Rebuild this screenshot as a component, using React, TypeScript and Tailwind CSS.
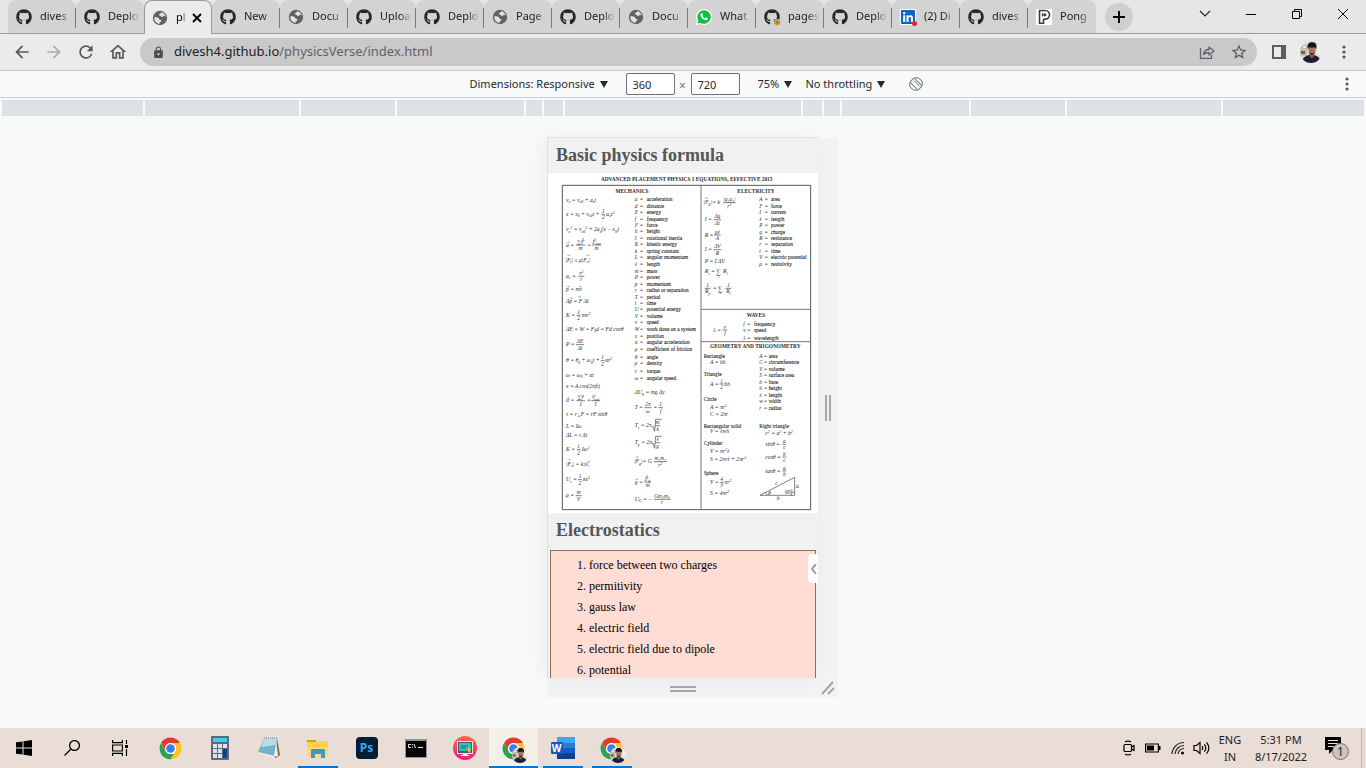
import React from "react";
import { FaGithub, FaLinkedin } from "react-icons/fa";
import { MdArrowBack, MdArrowForward, MdRefresh, MdOutlineHome, MdLock, MdStarBorder } from "react-icons/md";

/* ---------- Browser tabs ---------- */

type TabKind = "github" | "globe" | "whatsapp" | "pages" | "linkedin" | "pong";
type Tab = { kind: TabKind; title: string; active?: boolean };

const tabs: Tab[] = [
  { kind: "github", title: "dives" },
  { kind: "github", title: "Deplo" },
  { kind: "globe", title: "pl", active: true },
  { kind: "github", title: "New" },
  { kind: "globe", title: "Docu" },
  { kind: "github", title: "Uploa" },
  { kind: "github", title: "Deplo" },
  { kind: "globe", title: "Page" },
  { kind: "github", title: "Deplo" },
  { kind: "globe", title: "Docu" },
  { kind: "whatsapp", title: "What" },
  { kind: "pages", title: "pages" },
  { kind: "github", title: "Deplo" },
  { kind: "linkedin", title: "(2) Di" },
  { kind: "github", title: "dives" },
  { kind: "pong", title: "Pong" },
];

function Favicon({ kind }: { kind: TabKind }) {
  switch (kind) {
    case "github":
      return <FaGithub className="size-4 shrink-0 text-[#24292f]" />;
    case "globe":
      return (
        <svg viewBox="0 0 16 16" className="size-4 shrink-0">
          <circle cx="8" cy="8" r="7.200" fill="#5f6368" />
          <path
            d="M9.200 2.300c-.2 1.300-1.500 1.300-2 2-.5.900.2 1.500 1.100 1.500.9.100.7 1.200 1.600 1.300 1 .1.900-1 1.700-1.200.8-.2 1.500.3 2.200 1.100A6 6 0 0 0 9.200 2.300z"
            fill="#e3e3e3"
          />
          <path
            d="M2.300 7.300c1.600-.3 3.300-.2 4.200.6.900.8.4 1.600 1.300 1.900.9.300 1.600.2 1.500 1.100-.1 1-1.400.9-1.700 1.700-.2.500.1.900.1 1.500A6 6 0 0 1 2.300 7.300z"
            fill="#e3e3e3"
          />
        </svg>
      );
    case "whatsapp":
      return (
        <svg viewBox="0 0 16 16" className="size-4 shrink-0">
          <path d="M8 0a8 8 0 1 1-3.600 15.100L0 16l1-4.200A8 8 0 0 1 8 0z" fill="#fff" />
          <path d="M8 1.200a6.800 6.800 0 1 1-3.400 12.700L1.600 14.600l.8-3A6.800 6.800 0 0 1 8 1.200z" fill="#0cc143" />
          <path
            d="M5.300 4.200c.5-.4 1-.3 1.200.2l.5 1.200c.1.400-.2.700-.5 1.100.6 1.200 1.400 1.900 2.600 2.500.5-.6.700-1 1.200-.8l1.300.7c.4.300.2.900-.1 1.400-.7.900-2 .9-3.300.3-1.700-.8-2.900-2-3.600-3.600-.4-1.100-.2-2.300.7-3z"
            fill="#fff"
          />
        </svg>
      );
    case "pages":
      return (
        <span className="relative size-4 shrink-0">
          <FaGithub className="size-4 text-[#24292f]" />
          <span className="absolute -right-px -bottom-px size-[7px] rounded-full border border-[#d3d3d3] bg-[#bf8700]" />
        </span>
      );
    case "linkedin":
      return (
        <span className="relative size-4 shrink-0">
          <FaLinkedin className="size-4 bg-white text-[#0a66c2]" />
          <span className="absolute -right-px -bottom-px size-[5px] rounded-full bg-[#e0242f]" />
        </span>
      );
    default:
      return (
        <svg viewBox="0 0 16 16" className="size-4 shrink-0">
          <rect width="16" height="16" fill="#fff" />
          <path
            d="M3.500 1.500h5.700a4.300 4.300 0 0 1 0 8.700H7.500v4h-4z"
            fill="#fff"
            stroke="#3a3a3a"
            strokeWidth="1.600"
            strokeLinejoin="round"
          />
          <path d="M6.500 4.300v3.200" stroke="#3a3a3a" strokeWidth="1.200" />
          <circle cx="8.800" cy="5.800" r="1.600" fill="#3a3a3a" />
        </svg>
      );
  }
}

function TabStrip() {
  return (
    <div className="flex h-[33px] items-end bg-[#e6e6e6] pl-2">
      <div className="flex h-full" role="tablist">
        {tabs.map((tab, i) => {
          const next = tabs[i + 1];
          const divider = !tab.active && next && !next.active;
          return (
            <div
              key={i}
              className={
                tab.active
                  ? "relative flex h-[34px] w-[68px] items-center rounded-t-lg border border-b-0 border-[#9b9b9b] bg-[#ebebeb] pl-[7px]"
                  : "relative flex h-[33px] w-[68px] items-center rounded-t-lg bg-[#d3d3d3] pl-2"
              }
            >
              <button role="tab" aria-selected={!!tab.active} className="flex items-center gap-2">
                <Favicon kind={tab.kind} />
                <span
                  className={
                    tab.active
                      ? "w-[11px] text-left text-[11px] whitespace-nowrap text-black [mask-image:linear-gradient(to_right,black_50%,transparent)]"
                      : "w-8 text-left text-[11px] whitespace-nowrap text-[#202124] [mask-image:linear-gradient(to_right,black_60%,transparent)]"
                  }
                >
                  {tab.title}
                </span>
              </button>
              {tab.active && (
                <button aria-label="Close tab" className="ml-[5px]">
                  <svg viewBox="0 0 10 10" className="size-[10px]" stroke="#000" strokeWidth="2">
                    <path d="M1 1l8 8M9 1L1 9" />
                  </svg>
                </button>
              )}
              {divider && <span className="absolute top-2 right-0 h-5 w-px bg-[#7b7b7b]" />}
            </div>
          );
        })}
      </div>
      <button
        aria-label="New tab"
        className="mb-[2px] ml-[9px] flex size-7 items-center justify-center rounded-full bg-[#cfcfcf]"
      >
        <svg viewBox="0 0 12 12" className="size-3" stroke="#000" strokeWidth="2">
          <path d="M6 0v12M0 6h12" />
        </svg>
      </button>
      <div className="ml-auto flex h-7 items-start">
        <button aria-label="Search tabs" className="flex h-[18px] w-[46px] items-center justify-center">
          <svg viewBox="0 0 12 8" className="h-2 w-3" fill="none" stroke="#222" strokeWidth="1.100">
            <path d="M1 1l5 5 5-5" />
          </svg>
        </button>
        <button aria-label="Minimize" className="flex h-[18px] w-[46px] items-center justify-center">
          <svg viewBox="0 0 10 10" className="size-[10px]" fill="none" stroke="#000">
            <path d="M0 5.500h10" />
          </svg>
        </button>
        <button aria-label="Restore" className="flex h-[18px] w-[46px] items-center justify-center">
          <svg viewBox="0 0 10 10" className="size-[10px]" fill="none" stroke="#000">
            <path d="M.5 2.500h7v7h-7zM2.500 2.500v-2h7v7h-2" />
          </svg>
        </button>
        <button aria-label="Close" className="flex h-[18px] w-[46px] items-center justify-center">
          <svg viewBox="0 0 10 10" className="size-[10px]" fill="none" stroke="#000">
            <path d="M0 0l10 10M10 0L0 10" />
          </svg>
        </button>
      </div>
    </div>
  );
}

/* ---------- Address bar ---------- */

function Avatar({ className }: { className: string }) {
  return (
    <svg viewBox="0 0 22 22" className={className}>
      <defs>
        <clipPath id="avatar-clip">
          <circle cx="11" cy="11" r="11" />
        </clipPath>
      </defs>
      <g clipPath="url(#avatar-clip)">
        <rect width="22" height="22" fill="#dedbd6" />
        <path d="M0 4h7v11H0z" fill="#b9c2b0" />
        <path d="M1 10h4v3H1z" fill="#9c4f4a" />
        <path d="M3 5h3v2H3z" fill="#eceae6" />
        <path d="M17 3h5v11h-5z" fill="#f0eeeb" />
        <path d="M2 22c0-5 3-7 7-8h5c4 1 6 3 7 8z" fill="#211d33" />
        <path d="M9.500 11h4.500v4L12 17.500 9.500 15z" fill="#8a5f4c" />
        <ellipse cx="12" cy="9" rx="3.500" ry="5" fill="#a87660" />
        <path d="M8 8.500C6.500 4 8.500 1.300 12.300 1.300S17.300 4.500 16 8.500L15 6.300c-1.800.4-4 .4-6 0z" fill="#15120f" />
        <path d="M9.500 11.500q2.500 1 5 0L13.800 14h-3.600z" fill="#4a3028" />
      </g>
    </svg>
  );
}

function Dots() {
  return (
    <svg viewBox="0 0 4 14" className="h-[14px] w-1" fill="#55585c">
      <circle cx="2" cy="2" r="1.600" />
      <circle cx="2" cy="7" r="1.600" />
      <circle cx="2" cy="12" r="1.600" />
    </svg>
  );
}

function AddressBar() {
  return (
    <div className="flex h-[38px] items-center border-y border-t-[#9b9b9b] border-b-[#c4c6c8] bg-[#ebebeb] px-3 text-[#55585c]">
      <button aria-label="Back" className="flex w-5 justify-center">
        <MdArrowBack className="size-5" />
      </button>
      <button aria-label="Forward" className="ml-3 flex w-5 justify-center text-[#a9abad]">
        <MdArrowForward className="size-5" />
      </button>
      <button aria-label="Reload" className="ml-3 flex w-5 justify-center">
        <MdRefresh className="size-5" />
      </button>
      <button aria-label="Home" className="ml-3 flex w-5 justify-center">
        <MdOutlineHome className="size-5" />
      </button>
      <div className="ml-3 flex h-7 flex-1 items-center rounded-full bg-[#c9c9c9] pr-[9px] pl-3">
        <MdLock className="size-[13px] text-[#4a4d51]" />
        <a
          href="https://divesh4.github.io/physicsVerse/index.html"
          className="ml-[9px] flex-1 text-[13px] text-[#202124]"
        >
          divesh4.github.io<span className="text-[#5f6368]">/physicsVerse/index.html</span>
        </a>
        <button aria-label="Share">
          <svg viewBox="0 0 16 16" className="size-4" fill="none" stroke="#5f6368" strokeWidth="1.300">
            <path d="M1.500 4v10.300h11V11" />
            <path d="M4.500 10.500c.3-3.500 2.500-5 5.500-5V3l5 4-5 4V8.500c-2.500 0-4.200.4-5.500 2z" strokeLinejoin="round" />
          </svg>
        </button>
        <button aria-label="Bookmark" className="ml-[15px]">
          <MdStarBorder className="size-[18px]" />
        </button>
      </div>
      <button aria-label="Side panel" className="ml-[15px]">
        <svg viewBox="0 0 14 14" className="size-[14px]">
          <path d="M0 0h14v14H0zM2 2v10h7V2z" fill="#5b5e63" fillRule="evenodd" />
        </svg>
      </button>
      <button aria-label="Profile" className="ml-[14px]">
        <Avatar className="size-[22px]" />
      </button>
      <button aria-label="Menu" className="mr-2 ml-5">
        <Dots />
      </button>
    </div>
  );
}

/* ---------- Device toolbar ---------- */

function Picker({ label, value }: { label: string; value: string }) {
  return (
    <span className="flex items-center gap-1">
      <select
        aria-label={label}
        className="appearance-none bg-transparent text-[11px] text-[#27292c]"
        defaultValue={value}
      >
        <option>{value}</option>
      </select>
      <svg viewBox="0 0 8 7" className="pointer-events-none h-[7px] w-2" fill="#27292c">
        <path d="M0 0h8L4 7z" />
      </svg>
    </span>
  );
}

const field = "h-[22px] w-[49px] rounded-[2px] border border-[#6f7175] bg-white px-[6px] text-[11px] text-[#27292c]";

function DeviceToolbar() {
  return (
    <div className="relative flex h-[27px] items-center justify-center border-b border-[#cacdd1] bg-[#f8faf9] pl-[26px]">
      <Picker label="Device" value="Dimensions: Responsive" />
      <input aria-label="Width" defaultValue="360" className={field + " ml-[18px]"} />
      <span className="w-4 pt-1 text-center text-xs text-[#a1665c]">×</span>
      <input aria-label="Height" defaultValue="720" className={field + " mr-[18px]"} />
      <Picker label="Zoom" value="75%" />
      <span className="w-[14px]" />
      <Picker label="Throttling" value="No throttling" />
      <button aria-label="Rotate" className="ml-6">
        <svg viewBox="0 0 14 14" className="size-[14px]" fill="none" stroke="#6e7277">
          <rect x="4" y="1.200" width="6" height="11.600" rx="1" transform="rotate(-45 7 7)" />
          <path d="M6 .7a6.400 6.400 0 0 1 7.400 7.300M8 13.300A6.400 6.400 0 0 1 .6 6" />
          <path d="M5 3.600l5.400 5.400" />
        </svg>
      </button>
      <button aria-label="More options" className="absolute right-[17px]">
        <Dots />
      </button>
    </div>
  );
}

function Ruler() {
  const outer = (
    <>
      <span className="flex-[141]" />
      <span className="flex-[154]" />
      <span className="flex-[94]" />
      <span className="flex-[127]" />
      <span className="flex-[16]" />
      <span className="flex-[19]" />
    </>
  );
  return (
    <div className="flex h-[18px] gap-[2px] px-[2px] pt-[2px]">
      <div className="flex flex-[561] gap-[2px] *:bg-[#dee1e6]">{outer}</div>
      <div className="flex-[237] bg-[#dee1e6]" />
      <div className="flex flex-[561] flex-row-reverse gap-[2px] *:bg-[#dee1e6]">{outer}</div>
    </div>
  );
}

/* ---------- Formula sheet ---------- */

/* Reads "v_{x}^{2}" style markup into sub- and superscript runs. */
function runs(src: string) {
  const parts = src.match(/[_^]\{[^}]*\}|[^_^]+/g) ?? [];
  let shift = 0;
  return parts.map((p, i) => {
    const sub = p[0] === "_";
    const sup = p[0] === "^";
    const level = sub ? 4 : sup ? -6 : 0;
    const dy = level - shift;
    shift = level;
    return (
      <tspan key={i} dy={dy} fontSize={level ? 12 : undefined}>
        {sub || sup ? p.slice(2, -1) : p}
      </tspan>
    );
  });
}

type Item = [number, number, string];
type Fraction = [number, number, string, string, number];

const formulas: Item[] = [
  [54, 82, "v_{x} = v_{x0} + a_{x}t"],
  [54, 124, "x = x_{0} + v_{x0}t +"], [175, 124, "a_{x}t^{2}"],
  [54, 170, "v_{x}^{2} = v_{x0}^{2} + 2a_{x}(x − x_{0})"],
  [54, 216, "a ="], [118, 216, "="],
  [52, 261, "|F_{f}| ≤ μ|F_{n}|"],
  [54, 310, "a_{c} ="],
  [54, 349, "p = mv"],
  [54, 384, "Δp = F Δt"],
  [54, 427, "K ="], [101, 427, "mv^{2}"],
  [54, 468, "ΔE = W = F_{∥}d = Fd cosθ"],
  [54, 515, "P ="],
  [54, 563, "θ = θ_{0} + ω_{0}t +"], [172, 563, "αt^{2}"],
  [54, 606, "ω = ω_{0} + αt"],
  [54, 641, "x = A cos(2πft)"],
  [54, 683, "α ="], [117, 683, "="],
  [54, 724, "τ = r_{⊥}F = rF sinθ"],
  [54, 759, "L = Iω"],
  [54, 788, "ΔL = τ Δt"],
  [54, 830, "K ="], [101, 830, "Iω^{2}"],
  [54, 874, "|F_{s}| = k|x|"],
  [54, 920, "U_{s} ="], [105, 920, "kx^{2}"],
  [54, 968, "ρ ="],
  [260, 657, "ΔU_{g} = mg Δy"],
  [260, 704, "T ="], [316, 704, "="],
  [260, 758, "T_{s} = 2π"],
  [260, 809, "T_{p} = 2π"],
  [258, 866, "|F_{g}|= G"],
  [260, 927, "g ="],
  [260, 979, "U_{G} = −"],
  [466, 89, "|F_{E}|= k"],
  [470, 140, "I ="],
  [470, 186, "R ="],
  [470, 230, "I ="],
  [470, 265, "P = I ΔV"],
  [470, 296, "R_{s} ="], [525, 296, "R_{i}"],
  [494, 346, "="],
  [496, 471, "λ ="],
  [486, 569, "A = bh"],
  [486, 633, "A ="], [529, 633, "bh"],
  [486, 703, "A = πr^{2}"],
  [486, 723, "C = 2πr"],
  [486, 776, "V = ℓwh"],
  [486, 835, "V = πr^{2}ℓ"],
  [486, 860, "S = 2πrℓ + 2πr^{2}"],
  [486, 928, "V ="], [529, 928, "πr^{3}"],
  [486, 962, "S = 4πr^{2}"],
  [652, 781, "c^{2} = a^{2} + b^{2}"],
  [652, 814, "sinθ ="],
  [652, 852, "cosθ ="],
  [652, 894, "tanθ ="],
  [682, 932, "c"], [744, 940, "a"], [686, 977, "b"], [660, 960, "θ"], [710, 958, "90°"],
];

const fractions: Fraction[] = [
  [166, 124, "1", "2", 12],
  [98, 216, "∑F", "m", 28], [146, 216, "F_{net}", "m", 28],
  [100, 310, "v^{2}", "r", 18],
  [92, 427, "1", "2", 12],
  [96, 515, "ΔE", "Δt", 24],
  [164, 563, "1", "2", 12],
  [98, 683, "∑τ", "I", 26], [143, 683, "τ_{net}", "I", 26],
  [92, 830, "1", "2", 12],
  [96, 920, "1", "2", 12],
  [92, 968, "m", "V", 18],
  [300, 704, "2π", "ω", 22], [338, 704, "1", "f", 14],
  [329, 758, "m", "k", 16],
  [329, 809, "ℓ", "g", 16],
  [337, 866, "m_{1}m_{2}", "r^{2}", 38],
  [299, 927, "F_{g}", "m", 20],
  [342, 979, "Gm_{1}m_{2}", "r", 50],
  [544, 89, "|q_{1}q_{2}|", "r^{2}", 38],
  [508, 140, "Δq", "Δt", 22],
  [508, 186, "ρℓ", "A", 20],
  [508, 230, "ΔV", "R", 24],
  [479, 346, "1", "R_{p}", 18],
  [541, 346, "1", "R_{i}", 18],
  [531, 471, "v", "f", 14],
  [521, 633, "1", "2", 12],
  [521, 928, "4", "3", 12],
  [709, 814, "a", "c", 12],
  [709, 852, "b", "c", 12],
  [709, 894, "a", "b", 12],
];

/* Vector marks above symbols, as left end and height. */
const arrows: [number, number][] = [
  [55, 208], [99, 198], [135, 198], [57, 247], [115, 247], [55, 341], [91, 341], [65, 376], [89, 371],
  [55, 675], [99, 668], [133, 668], [58, 860], [116, 866], [262, 852], [291, 909], [261, 919], [470, 75],
];

const mechanics: [number, string, string][] = [
  [80, "a", "acceleration"], [99, "d", "distance"], [118, "E", "energy"], [138, "f", "frequency"],
  [157, "F", "force"], [176, "h", "height"], [196, "I", "rotational inertia"], [215, "K", "kinetic energy"],
  [235, "k", "spring constant"], [254, "L", "angular momentum"], [274, "ℓ", "length"], [294, "m", "mass"],
  [313, "P", "power"], [333, "p", "momentum"], [352, "r", "radius or separation"], [372, "T", "period"],
  [391, "t", "time"], [410, "U", "potential energy"], [429, "V", "volume"], [448, "v", "speed"],
  [469, "W", "work done on a system"], [489, "x", "position"], [508, "α", "angular acceleration"],
  [529, "μ", "coefficient of friction"], [552, "θ", "angle"], [572, "ρ", "density"], [595, "τ", "torque"],
  [615, "ω", "angular speed"],
];

const electricity: [number, string, string][] = [
  [80, "A", "area"], [99, "F", "force"], [118, "I", "current"], [138, "ℓ", "length"], [157, "P", "power"],
  [177, "q", "charge"], [196, "R", "resistance"], [215, "r", "separation"], [235, "t", "time"],
  [254, "V", "electric potential"], [274, "ρ", "resistivity"],
];

const waves: [number, string, string][] = [
  [455, "f", "frequency"], [472, "v", "speed"], [496, "λ", "wavelength"],
];

const geometry: [number, string, string][] = [
  [550, "A", "area"], [569, "C", "circumference"], [588, "V", "volume"], [608, "S", "surface area"],
  [628, "b", "base"], [647, "h", "height"], [666, "ℓ", "length"], [686, "w", "width"], [706, "r", "radius"],
];

const shapes: Item[] = [
  [467, 550, "Rectangle"], [467, 604, "Triangle"], [467, 678, "Circle"], [467, 759, "Rectangular solid"],
  [467, 811, "Cylinder"], [467, 900, "Sphere"], [634, 759, "Right triangle"],
];

const headings: Item[] = [
  [416, 18, "ADVANCED PLACEMENT PHYSICS 1 EQUATIONS, EFFECTIVE 2015"],
  [252, 54, "MECHANICS"],
  [624, 54, "ELECTRICITY"],
  [624, 426, "WAVES"],
  [622, 521, "GEOMETRY AND TRIGONOMETRY"],
];

function Glossary({ rows, x, eq, word }: { rows: [number, string, string][]; x: number; eq: number; word: number }) {
  return (
    <g>
      {rows.map(([y, symbol, meaning]) => (
        <g key={symbol}>
          <text x={x} y={y + 5} fontStyle="italic">{symbol}</text>
          <text x={eq} y={y + 5}>=</text>
          <text x={word} y={y + 5} stroke="#222" strokeWidth="0.300">{meaning}</text>
        </g>
      ))}
    </g>
  );
}

function FormulaSheet() {
  return (
    <svg
      viewBox="0 0 810 1020"
      role="img"
      aria-label="Physics equations"
      className="block w-full bg-white"
      fontFamily="'Liberation Serif', 'DejaVu Serif', serif"
      fontSize="16"
      fill="#2c2c2c"
    >
      <g fill="none" stroke="#555" strokeWidth="3">
        <path d="M43 37H788V1010H43z" />
        <path d="M459 37V1010M459 409H788M459 506H788" stroke="#777" />
      </g>
      <g textAnchor="middle" fontWeight="bold">
        {headings.map(([x, y, t]) => (
          <text key={t} x={x} y={y + 5}>{t}</text>
        ))}
      </g>
      <Glossary rows={mechanics} x={260} eq={276} word={296} />
      <Glossary rows={electricity} x={634} eq={650} word={669} />
      <Glossary rows={waves} x={586} eq={598} word={618} />
      <Glossary rows={geometry} x={634} eq={648} word={662} />
      <g stroke="#222" strokeWidth="0.300">
        {shapes.map(([x, y, t]) => (
          <text key={t} x={x} y={y + 5}>{t}</text>
        ))}
      </g>
      <g fontStyle="italic" fontSize="17">
        {formulas.map(([x, y, t], i) => (
          <text key={i} x={x} y={y + 5}>{runs(t)}</text>
        ))}
      </g>
      <g fontStyle="italic" textAnchor="middle">
        {fractions.map(([x, y, n, d, w], i) => (
          <g key={i}>
            <text x={x} y={y - 4}>{runs(n)}</text>
            <path d={`M${x - w / 2} ${y}h${w}`} stroke="#444" strokeWidth="2" />
            <text x={x} y={y + 15}>{runs(d)}</text>
          </g>
        ))}
      </g>
      <g fill="none" stroke="#555" strokeWidth="1">
        {arrows.map(([x, y]) => (
          <path key={`${x}-${y}`} d={`M${x} ${y}h9l-3-2m3 2l-3 2`} />
        ))}
      </g>
      <text x="505" y="303" fontSize="20">∑</text>
      <text x="511" y="314" fontSize="10" fontStyle="italic">i</text>
      <text x="510" y="353" fontSize="20">∑</text>
      <text x="516" y="364" fontSize="10" fontStyle="italic">i</text>
      <g fill="none" stroke="#444" strokeWidth="2">
        <path d="M312 762l3-2 5 15 3-36h18M312 813l3-2 5 15 3-36h18" />
        <path d="M636 967L740 913V967zM730 967v-9h10M656 967q0-6-5-9" />
      </g>
    </svg>
  );
}

/* ---------- Emulated device ---------- */

const topics = [
  "force between two charges",
  "permitivity",
  "gauss law",
  "electric field",
  "electric field due to dipole",
  "potential",
];

function SectionTitle({ children }: { children: React.ReactNode }) {
  return <h2 className="h-[35px] pl-2 text-lg leading-[34px] font-bold text-[#555]">{children}</h2>;
}

function Device() {
  return (
    <div className="flex justify-center pt-[21px]">
      <div className="w-[19px]" />
      <div className="w-[271px]">
        <div className="relative h-[541px] overflow-hidden border-t border-l border-[#e2e0e0] bg-[#f1f1f1] font-['Liberation_Serif',serif] shadow-[-4px_0_20px_rgba(0,0,0,0.05)]">
          <SectionTitle>Basic physics formula</SectionTitle>
          <FormulaSheet />
          <SectionTitle>Electrostatics</SectionTitle>
          <ol className="mx-[2px] mt-[2px] list-inside list-decimal border border-[#8d6f58] bg-[#ffddd4] pt-1 pb-4 pl-[26px] text-xs leading-[21px] text-black">
            {topics.map((t) => (
              <li key={t}>{t}</li>
            ))}
          </ol>
          <button
            aria-label="Open panel"
            className="absolute right-0 bottom-[95px] flex h-[29px] w-[10px] items-center rounded-l-[4px] bg-white pl-[3px]"
          >
            <svg viewBox="0 0 6 10" className="h-[10px] w-[6px]" fill="none" stroke="#999" strokeWidth="2">
              <path d="M5 0L1 5l4 5" />
            </svg>
          </button>
        </div>
        <div className="ml-px flex h-5 items-center justify-center bg-[#f1f3f4] pt-px">
          <svg viewBox="0 0 26 6" className="h-[6px] w-[26px]" fill="#a9a9a9">
            <path d="M0 0h26v2H0zM0 4h26v2H0z" />
          </svg>
        </div>
      </div>
      <div className="mt-px flex w-5 flex-col bg-[#f1f3f4]">
        <div className="flex h-[540px] items-center justify-center">
          <svg viewBox="0 0 6 26" className="h-[26px] w-[6px]" fill="#a9a9a9">
            <path d="M0 0h2v26H0zM4 0h2v26H4z" />
          </svg>
        </div>
        <div className="flex h-5 items-center justify-center">
          <svg viewBox="0 0 14 14" className="size-[14px]" stroke="#a3a3a3" strokeWidth="2">
            <path d="M1 13L12 1M7 13l6-6" />
          </svg>
        </div>
      </div>
    </div>
  );
}

/* ---------- Windows taskbar ---------- */

function ChromeLogo({ className }: { className: string }) {
  return (
    <svg viewBox="0 0 48 48" className={className}>
      <circle cx="24" cy="24" r="23" fill="#fff" />
      <path d="M24 1a23 23 0 0 1 19.900 11.500H24A11.500 11.500 0 0 0 14 18.300L4.100 12.500A23 23 0 0 1 24 1z" fill="#e33b2e" />
      <path d="M4.100 12.500L14 29.800l1-12z" fill="#e33b2e" />
      <path d="M43.900 12.500A23 23 0 0 1 24 47l10-17.200a11.500 11.500 0 0 0 0-11.600l-10-5.700z" fill="#fcc31e" />
      <path d="M24 47A23 23 0 0 1 4.100 12.500L14 29.800A11.500 11.500 0 0 0 24 35.500l6.600-.1z" fill="#2da14c" />
      <circle cx="24" cy="24" r="11.500" fill="#fff" />
      <circle cx="24" cy="24" r="9" fill="#3b7ded" />
    </svg>
  );
}

function ChromeProfile() {
  return (
    <span className="relative flex">
      <ChromeLogo className="size-[23px]" />
      <Avatar className="absolute -right-[3px] -bottom-[3px] size-4" />
    </span>
  );
}

function CalculatorIcon() {
  return (
    <svg viewBox="0 0 18 24" className="h-6 w-[18px]">
      <rect width="18" height="24" rx="1" fill="#5c6b7a" />
      <rect x="2" y="2" width="14" height="4" fill="#40cdf5" />
      <path d="M2 8h4v4H2zM7 8h4v4H7zM12 8h4v4h-4zM2 13h4v4H2zM7 13h4v4H7zM2 18h4v4H2zM7 18h4v4H7z" fill="#dce3ea" />
      <rect x="12" y="13" width="4" height="9" fill="#143f86" />
    </svg>
  );
}

function NotepadIcon() {
  return (
    <svg viewBox="0 0 24 22" className="h-[22px] w-6">
      <path d="M20 1l3 17-4 3-3-2z" fill="#7a6a4e" />
      <path d="M19 2l2 17-5 1z" fill="#f7f4ea" />
      <path d="M7 1h13l-3 18L1 15z" fill="#6fb4c8" />
      <path d="M7 1h13l-1 7L4 10z" fill="#b4dde6" />
      <path d="M1 15l16 4-1 2L1 16z" fill="#e8ecec" />
      <path d="M7 1h13" stroke="#6b7c80" strokeDasharray="1 1" />
    </svg>
  );
}

function ExplorerIcon() {
  return (
    <svg viewBox="0 0 22 19" className="h-[19px] w-[22px]">
      <path d="M0 1h9l1 3H0z" fill="#d99e14" />
      <path d="M0 3h10l2-1h9v16H0z" fill="#fccf54" />
      <path d="M0 8h21v10H0z" fill="#ffd96f" />
      <path d="M4 11q0-1 1-1h12q1 0 1 1v8h-4v-4H8v4H4z" fill="#3d94d6" />
    </svg>
  );
}

function PhotoshopIcon() {
  return (
    <span className="flex size-[22px] items-center justify-center rounded-[4px] bg-[#001e36] text-xs font-bold text-[#35a8ff]">
      Ps
    </span>
  );
}

function TerminalIcon() {
  return (
    <svg viewBox="0 0 22 19" className="h-[19px] w-[22px]">
      <rect width="22" height="19" fill="#8f9499" />
      <rect x="1" y="2" width="20" height="16" fill="#050505" />
      <path d="M6 5.500H3.500v3H6M7.500 5v1M7.500 7.500v1M9 5l1.500 4M13 8.500h5" stroke="#e6e6e6" fill="none" />
    </svg>
  );
}

function MonitorIcon() {
  return (
    <svg viewBox="0 0 24 24" className="size-6">
      <defs>
        <linearGradient id="monitor-fill" x1="0" y1="0" x2="0" y2="1">
          <stop offset="0" stopColor="#fb6a3c" />
          <stop offset="1" stopColor="#e91e8c" />
        </linearGradient>
      </defs>
      <circle cx="12" cy="12" r="12" fill="url(#monitor-fill)" />
      <rect x="4" y="5" width="16" height="13" fill="#f4e3da" />
      <rect x="5" y="6" width="14" height="11" fill="#4d5a66" />
      <rect x="6" y="7" width="12" height="8" fill="#24c7c5" />
      <path d="M8 10h7M8 12h5" stroke="#4d5a66" />
      <path d="M10 18h4v1h2v1H8v-1h2z" fill="#fff" />
      <path d="M15 11l3 2-1 4-2-1z" fill="#e2c02c" />
    </svg>
  );
}

function WordIcon() {
  return (
    <span className="relative flex">
      <svg viewBox="0 0 24 22" className="h-[22px] w-6">
        <path d="M6 0h18v6H6z" fill="#41a5ee" />
        <path d="M6 6h18v5H6z" fill="#2b7cd3" />
        <path d="M6 11h18v5H6z" fill="#185abd" />
        <path d="M6 16h18v6H6z" fill="#103f91" />
        <rect y="5" width="12" height="12" rx="1" fill="#185abd" />
      </svg>
      <span className="absolute top-[5px] left-0 w-3 text-center text-[10px] leading-3 font-bold text-white">W</span>
    </span>
  );
}

const apps: { name: string; icon: React.ReactNode; state?: "open" | "active" }[] = [
  { name: "Chrome", icon: <ChromeLogo className="size-[23px]" /> },
  { name: "Calculator", icon: <CalculatorIcon /> },
  { name: "Notepad", icon: <NotepadIcon /> },
  { name: "File Explorer", icon: <ExplorerIcon />, state: "open" },
  { name: "Photoshop", icon: <PhotoshopIcon /> },
  { name: "Command Prompt", icon: <TerminalIcon /> },
  { name: "Screen", icon: <MonitorIcon /> },
  { name: "Chrome profile", icon: <ChromeProfile />, state: "active" },
  { name: "Word", icon: <WordIcon />, state: "open" },
  { name: "Chrome window", icon: <ChromeProfile />, state: "open" },
];

function Taskbar() {
  return (
    <footer className="flex h-10 bg-[#eaddd5] text-[11px] text-[#1b1b1b]">
      <button aria-label="Start" className="flex w-12 items-center justify-center">
        <svg viewBox="0 0 16 16" className="size-4">
          <path d="M0 2.300L6.500 1.400V7.500H0zM7.500 1.200L16 0v7.500H7.500zM0 8.500h6.500v6.100L0 13.700zM7.500 8.500H16V16l-8.500-1.200z" />
        </svg>
      </button>
      <button aria-label="Search" className="flex w-12 items-center justify-center">
        <svg viewBox="0 0 16 16" className="size-4" fill="none" stroke="#000" strokeWidth="1.300">
          <circle cx="10.500" cy="5.500" r="4.900" />
          <path d="M7 9L.5 15.500" />
        </svg>
      </button>
      <button aria-label="Task view" className="flex w-12 items-center justify-center">
        <svg viewBox="0 0 16 16" className="size-4" fill="none" stroke="#000" strokeWidth="1.200">
          <path d="M.6 0v2.600h9.800V0M.6 16v-2.600h9.800V16M.6 5h9.800v6H.6zM14.500 0v4M14.500 9v7" />
          <path d="M13 5h3v3h-3z" fill="#000" stroke="none" />
        </svg>
      </button>
      <div className="ml-[2px] flex">
        {apps.map((app) => (
          <button
            key={app.name}
            aria-label={app.name}
            className={
              app.state === "active"
                ? "relative flex w-[49px] items-center justify-center bg-[#f5efec]"
                : "relative flex w-[49px] items-center justify-center"
            }
          >
            {app.icon}
            {app.state === "open" && <span className="absolute bottom-0 h-[2px] w-10 bg-[#0078d7]" />}
            {app.state === "active" && <span className="absolute bottom-0 h-[2px] w-full bg-[#0078d7]" />}
          </button>
        ))}
      </div>
      <div className="ml-auto flex items-center">
        <button aria-label="Meet now" className="mr-[9px]">
          <svg viewBox="0 0 14 16" className="h-4 w-[14px]" fill="none" stroke="#000" strokeWidth="1.200">
            <rect x="2" y="4.500" width="7.500" height="7" rx="1" />
            <path d="M9.500 7l2.500-1.500v5L9.500 9M3 1.800q3-1.500 6 0M3 14.200q3 1.500 6 0" />
          </svg>
        </button>
        <button aria-label="Battery" className="mr-[10px]">
          <svg viewBox="0 0 16 10" className="h-[10px] w-4">
            <path d="M.6 1h12.800v8H.6z" fill="none" stroke="#000" strokeWidth="1.200" />
            <path d="M2 2.500h7v5H2zM14 3h1.500v4H14z" />
          </svg>
        </button>
        <button aria-label="Network" className="mr-2">
          <svg viewBox="0 0 14 14" className="size-[14px]" fill="none" stroke="#222" strokeWidth="1.200">
            <path d="M1 13A12 12 0 0 1 13 1.500M4 13a9 9 0 0 1 9-8.500M7 13a6 6 0 0 1 6-5.500" />
            <circle cx="11.500" cy="12" r="1.500" fill="#000" stroke="none" />
          </svg>
        </button>
        <button aria-label="Volume" className="mr-2">
          <svg viewBox="0 0 17 14" className="h-[14px] w-[17px]" fill="none" stroke="#000" strokeWidth="1.200">
            <path d="M1 4.500h2.500L7 1.500v11L3.500 9.500H1zM9 5q1.500 2 0 4M11.300 3.300q3 3.700 0 7.400M13.600 1.500q4.500 5.500 0 11" />
          </svg>
        </button>
        <button className="w-6 text-center leading-[17px]">
          ENG
          <br />
          IN
        </button>
        <button className="ml-3 w-[54px] text-center leading-[17px] whitespace-nowrap">
          5:31 PM
          <br />
          8/17/2022
        </button>
        <button aria-label="Notifications" className="relative mr-[11px] ml-[17px] h-6 w-[25px]">
          <svg viewBox="0 0 25 24" className="h-6 w-[25px]">
            <path d="M0 1h16v13H8l-4 4v-4H0z" fill="#000" />
            <path d="M3 4.500h10M3 7.500h10M3 10.500h6" stroke="#eaddd5" />
            <circle cx="15.500" cy="15.500" r="8" fill="#c9c5c2" stroke="#77736f" />
          </svg>
          <span className="absolute top-2 left-[7px] w-[17px] text-center text-xs leading-4">1</span>
        </button>
        <span className="mr-1 h-10 w-px bg-[#bdb2ab]" />
      </div>
    </footer>
  );
}

export default function App() {
  return (
    <div className="flex min-h-screen flex-col bg-[#f8faf9] font-['Noto_Sans',sans-serif]">
      <header>
        <TabStrip />
        <AddressBar />
        <DeviceToolbar />
      </header>
      <main className="flex-1">
        <Ruler />
        <Device />
      </main>
      <Taskbar />
    </div>
  );
}
